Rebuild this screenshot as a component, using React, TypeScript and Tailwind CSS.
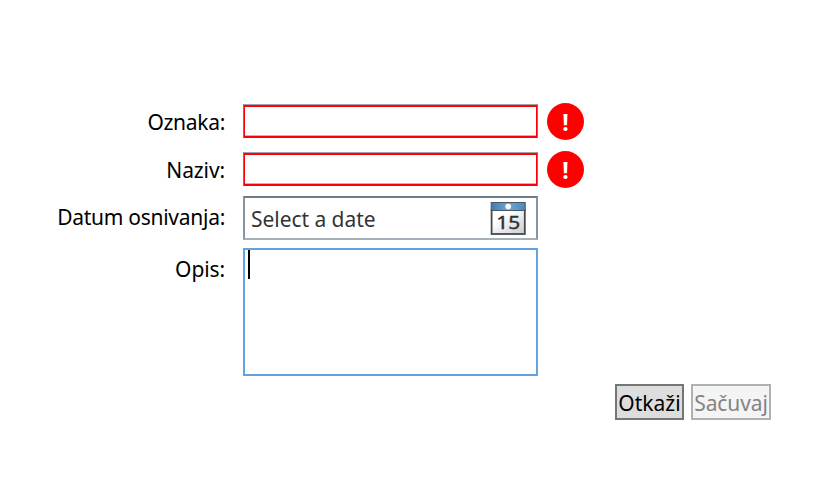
function Label({ className, text }: { className: string; text: string }) {
  return (
    <label className={`w-[225px] shrink-0 whitespace-nowrap text-right text-[21px] leading-8 ${className}`}>{text}</label>
  );
}

function InvalidField({ label, tracking }: { label: string; tracking: string }) {
  return (
    <div className="flex h-[37px] items-start">
      <Label className={`pt-[3px] ${tracking}`} text={label} />
      <div className="ml-[18px] mt-px h-[34px] w-[295px] border border-b-0 border-x-[#f0434a] border-t-[#a6a0a8]">
        <div className="h-[33px] border border-y-2 border-[#fb0007]">
          <div className="h-[29px] border-b border-[#b4b9c2]" />
        </div>
      </div>
      <div className="ml-[9px] flex size-[37px] items-center justify-center rounded-full bg-[#ff0000] pt-px text-[23px] font-bold leading-none text-white">
        !
      </div>
    </div>
  );
}

function CalendarIcon() {
  return (
    <svg width="36" height="34" viewBox="0 0 36 34">
      <defs>
        <linearGradient id="page" x1="0" y1="0" x2="1" y2="1">
          <stop offset="0.3" stopColor="#fff" />
          <stop offset="1" stopColor="#c9cbd1" />
        </linearGradient>
        <linearGradient id="header" x1="0" y1="0" x2="1" y2="0">
          <stop offset="0" stopColor="#3f7cb4" />
          <stop offset="0.5" stopColor="#6fa6d6" />
          <stop offset="1" stopColor="#4a88c0" />
        </linearGradient>
      </defs>
      <rect x="1.6" y="8" width="33.2" height="24" fill="url(#page)" stroke="#48494d" strokeWidth="1.8" />
      <rect x="1.2" y="0.5" width="34" height="8" fill="url(#header)" stroke="#4b5660" strokeWidth="1" />
      <circle cx="18.2" cy="4.6" r="2.8" fill="#fff" />
      <text x="6.3" y="27" fontSize="18" fill="#303030" stroke="#303030" strokeWidth="0.4" textLength="24" lengthAdjust="spacingAndGlyphs">15</text>
    </svg>
  );
}

export default function App() {
  return (
    <main className="h-[498px] w-[819px] overflow-hidden bg-white pt-[103px] font-['Noto_Sans','Open_Sans',sans-serif] text-black">
      <InvalidField label="Oznaka:" tracking="tracking-[-0.3px]" />
      <div className="h-[11px]" />
      <InvalidField label="Naziv:" tracking="tracking-[-0.1px]" />
      <div className="mt-2 flex h-11 items-start">
        <Label className="pt-[5px] tracking-[-0.27px]" text="Datum osnivanja:" />
        <div className="ml-[18px] flex h-11 w-[295px] items-start justify-between border-2 border-x-[#8795a2] border-t-[#6b7c8b] border-b-[#a7b0b9] pl-[6px] pr-[10px] pt-1">
          <span className="pt-px text-[21px] leading-8 tracking-[-0.05px] text-[#333]">Select a date</span>
          <CalendarIcon />
        </div>
      </div>
      <div className="mt-2 flex h-32 items-start">
        <Label className="pt-[5px] tracking-[-0.1px]" text="Opis:" />
        <div className="ml-[18px] h-32 w-[295px] border-2 border-[#64a1df] pl-[3px]">
          <div className="h-[29px] w-[2px] bg-black" />
        </div>
      </div>
      <div className="ml-[615px] mt-2 flex gap-[7px]">
        <button className="h-9 w-[69px] border-2 border-[#757575] bg-[#dddddd] pt-[2px] text-[21px] leading-[30px]">
          Otkaži
        </button>
        <button disabled className="h-9 w-20 border-2 border-[#adb2b5] bg-[#f4f4f4] pt-[2px] text-[21px] leading-[30px] tracking-[-0.1px] text-[#838383]">
          Sačuvaj
        </button>
      </div>
    </main>
  );
}
